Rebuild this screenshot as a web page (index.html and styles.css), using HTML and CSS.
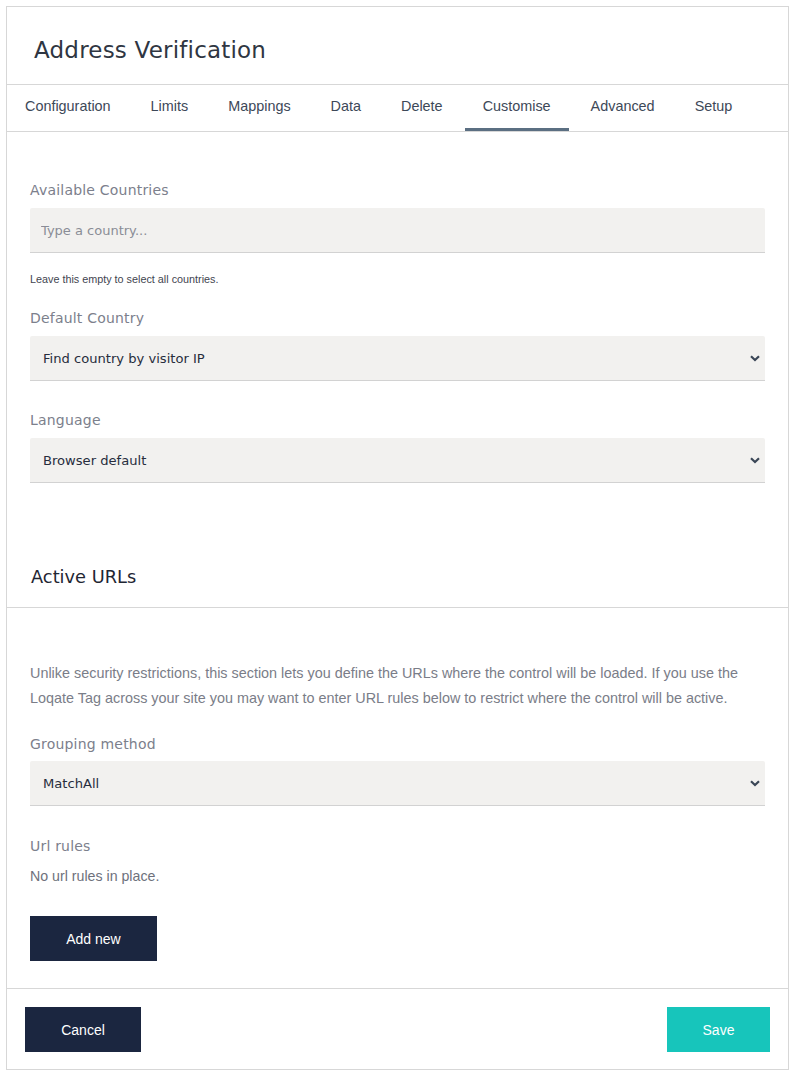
FILE: index.html
```html
<!DOCTYPE html>
<html lang="en">
<head>
<meta charset="utf-8">
<title>Address Verification</title>
<link rel="stylesheet" href="styles.css">
</head>
<body>
<div class="panel">
  <header class="panel-header">
    <h1 class="panel-title">Address Verification</h1>
  </header>
  <nav class="tabs">
    <a class="tab">Configuration</a>
    <a class="tab">Limits</a>
    <a class="tab">Mappings</a>
    <a class="tab">Data</a>
    <a class="tab">Delete</a>
    <a class="tab tab-active">Customise</a>
    <a class="tab">Advanced</a>
    <a class="tab">Setup</a>
  </nav>

  <section class="form-section">
    <label class="field-label">Available Countries</label>
    <input class="text-input" type="text" placeholder="Type a country...">
    <p class="help-text">Leave this empty to select all countries.</p>

    <label class="field-label field-label-spaced">Default Country</label>
    <div class="select-wrap">
      <select class="select-input"><option>Find country by visitor IP</option></select>
      <svg class="chevron" width="10" height="7" viewBox="0 0 10 7"><path d="M1 1.2 L5 5 L9 1.2" fill="none" stroke="#3a4656" stroke-width="2.2"/></svg>
    </div>

    <label class="field-label field-label-wide">Language</label>
    <div class="select-wrap">
      <select class="select-input"><option>Browser default</option></select>
      <svg class="chevron" width="10" height="7" viewBox="0 0 10 7"><path d="M1 1.2 L5 5 L9 1.2" fill="none" stroke="#3a4656" stroke-width="2.2"/></svg>
    </div>
  </section>

  <header class="sub-header">
    <h2 class="sub-title">Active URLs</h2>
  </header>

  <section class="form-section urls-section">
    <p class="intro-text">Unlike security restrictions, this section lets you define the URLs where the control will be loaded. If you use the Loqate Tag across your site you may want to enter URL rules below to restrict where the control will be active.</p>

    <label class="field-label field-label-group">Grouping method</label>
    <div class="select-wrap">
      <select class="select-input"><option>MatchAll</option></select>
      <svg class="chevron" width="10" height="7" viewBox="0 0 10 7"><path d="M1 1.2 L5 5 L9 1.2" fill="none" stroke="#3a4656" stroke-width="2.2"/></svg>
    </div>

    <label class="field-label field-label-url">Url rules</label>
    <p class="empty-text">No url rules in place.</p>

    <button class="btn btn-dark btn-add">Add new</button>
  </section>

  <footer class="panel-footer">
    <button class="btn btn-dark btn-cancel">Cancel</button>
    <button class="btn btn-teal btn-save">Save</button>
  </footer>
</div>
</body>
</html>
```

FILE: styles.css
```css
* { box-sizing: border-box; }

body {
  margin: 6px;
  background: #ffffff;
  font-family: "Liberation Sans", Arial, sans-serif;
}

.panel {
  border: 1px solid #d7d7d7;
  background: #fff;
}

.panel-header {
  height: 78px;
  border-bottom: 1px solid #d7d7d7;
  display: flex;
  align-items: center;
  padding: 9px 27px 0;
}

.panel-title {
  margin: 0;
  font-family: "DejaVu Sans", Verdana, sans-serif;
  font-weight: normal;
  font-size: 23px;
  color: #2f3642;
  letter-spacing: 0.2px;
}

.tabs {
  display: flex;
  gap: 4px;
  height: 47px;
  border-bottom: 1px solid #d7d7d7;
}

.tab {
  display: flex;
  align-items: center;
  padding: 0 18px 2px;
  font-size: 14.4px;
  color: #3d4858;
  border-bottom: 3px solid transparent;
  cursor: pointer;
}

.tab-active {
  border-bottom-color: #5b6f82;
}

.form-section {
  display: flex;
  flex-direction: column;
  align-items: flex-start;
  padding: 48px 23px 0;
}

.field-label {
  display: block;
  font-family: "DejaVu Sans", Verdana, sans-serif;
  font-size: 14px;
  line-height: 20px;
  color: #7c808c;
  margin-bottom: 8px;
  letter-spacing: 0.2px;
}

.field-label-spaced { margin-top: 22px; }
.field-label-wide { margin-top: 29px; }
.field-label-url { margin-top: 30px; }
.field-label-group { margin-top: 23px; margin-bottom: 7px; }

.text-input {
  width: 100%;
  height: 45px;
  border: none;
  border-bottom: 1px solid #d2d2d2;
  background: #f2f1ef;
  padding: 0 11px;
  font-family: "DejaVu Sans", Verdana, sans-serif;
  font-size: 13px;
  color: #333;
  outline: none;
  border-radius: 2px 2px 0 0;
}

.text-input::placeholder {
  color: #8a8d96;
}

.help-text {
  margin: 19px 0 0;
  font-size: 10.8px;
  line-height: 14px;
  color: #3f4550;
}

.select-wrap {
  position: relative;
  width: 100%;
}

.select-input {
  -webkit-appearance: none;
  appearance: none;
  width: 100%;
  height: 45px;
  border: none;
  border-bottom: 1px solid #d2d2d2;
  border-radius: 2px 2px 0 0;
  background: #f2f1ef;
  padding: 0 13px;
  font-family: "DejaVu Sans", Verdana, sans-serif;
  font-size: 13.1px;
  color: #272d3d;
  outline: none;
}

.chevron {
  position: absolute;
  right: 5px;
  top: 19px;
  pointer-events: none;
}

.sub-header {
  margin-top: 82px;
  padding: 0 24px 18px;
  border-bottom: 1px solid #d7d7d7;
}

.sub-title {
  margin: 0;
  font-family: "DejaVu Sans", Verdana, sans-serif;
  font-weight: normal;
  font-size: 17.8px;
  line-height: 24px;
  color: #1f2633;
}

.urls-section {
  padding-top: 53px;
}

.intro-text {
  margin: 0;
  font-size: 14.4px;
  line-height: 25px;
  color: #7a7d88;
}

.empty-text {
  margin: 2px 0 0;
  font-size: 14.2px;
  line-height: 20px;
  color: #6e717c;
}

.btn {
  border: none;
  font-family: "Liberation Sans", Arial, sans-serif;
  font-size: 14px;
  color: #fff;
  height: 45px;
  cursor: pointer;
  padding: 0;
}

.btn-dark { background: #1b2640; }
.btn-teal { background: #17c5bb; }

.btn-add {
  width: 127px;
  margin-top: 30px;
  margin-bottom: 27px;
}

.panel-footer {
  display: flex;
  justify-content: space-between;
  border-top: 1px solid #d7d7d7;
  padding: 18px 18px 17px;
}

.btn-cancel { width: 116px; }
.btn-save { width: 103px; }
```
